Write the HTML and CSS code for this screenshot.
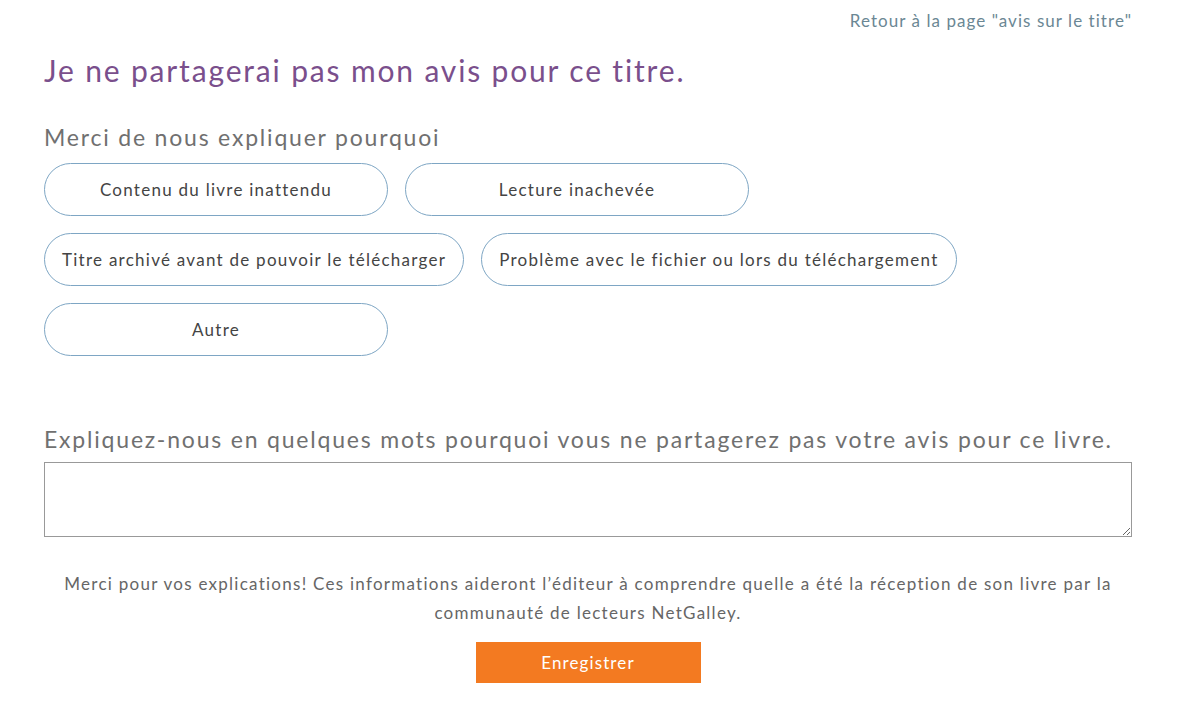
FILE: index.html
```html
<!DOCTYPE html>
<html lang="fr">
<head>
<meta charset="utf-8">
<title>Avis</title>
<link rel="stylesheet" href="styles.css">
</head>
<body>
<div class="page">
  <div class="top">
    <a class="back" href="#">Retour à la page "avis sur le titre"</a>
  </div>
  <h1 class="title">Je ne partagerai pas mon avis pour ce titre.</h1>
  <h2 class="subtitle">Merci de nous expliquer pourquoi</h2>
  <div class="pills">
    <div class="pill-row">
      <button class="pill">Contenu du livre inattendu</button>
      <button class="pill">Lecture inachevée</button>
    </div>
    <div class="pill-row">
      <button class="pill">Titre archivé avant de pouvoir le télécharger</button>
      <button class="pill">Problème avec le fichier ou lors du téléchargement</button>
    </div>
    <div class="pill-row">
      <button class="pill">Autre</button>
    </div>
  </div>
  <h2 class="subtitle explain">Expliquez-nous en quelques mots pourquoi vous ne partagerez pas votre avis pour ce livre.</h2>
  <textarea class="box"></textarea>
  <p class="thanks">Merci pour vos explications! Ces informations aideront l’éditeur à comprendre quelle a été la réception de son livre par la communauté de lecteurs NetGalley.</p>
  <div class="actions">
    <button class="save">Enregistrer</button>
  </div>
</div>
</body>
</html>
```
FILE: styles.css
```css
html, body {
  margin: 0;
  padding: 0;
  background: #fff;
}
body {
  font-family: Lato, "Open Sans", sans-serif;
  color: #555;
}
.page {
  width: 1088px;
  margin-left: 44px;
  display: flex;
  flex-direction: column;
}
.top {
  display: flex;
  justify-content: flex-end;
  padding-top: 9px;
}
.back {
  color: #6b8794;
  text-decoration: none;
  font-size: 17px;
  line-height: 24px;
  letter-spacing: 1.05px;
}
.title {
  margin: 17px 0 0;
  font-weight: 400;
  font-size: 30px;
  line-height: 40px;
  letter-spacing: 1.84px;
  color: #7a4f8c;
}
.subtitle {
  margin: 33px 0 0;
  font-weight: 400;
  font-size: 23px;
  line-height: 28px;
  letter-spacing: 1.8px;
  color: #707070;
}
.pills {
  display: flex;
  flex-direction: column;
  gap: 17px;
  margin-top: 12px;
}
.pill-row {
  display: flex;
  gap: 17px;
}
.pill {
  min-width: 344px;
  height: 53px;
  padding: 0 17px;
  border: 1px solid #7ea6c4;
  border-radius: 27px;
  background: #fff;
  font-family: inherit;
  font-size: 17px;
  letter-spacing: 1.26px;
  color: #444;
}
.explain {
  margin-top: 69px;
}
.box {
  margin-top: 9px;
  height: 75px;
  box-sizing: border-box;
  border: 1px solid #999;
  resize: vertical;
  font-family: inherit;
}
.thanks {
  margin: 32px 0 0;
  padding: 0 12px;
  text-align: center;
  font-size: 17px;
  line-height: 29px;
  letter-spacing: 1.26px;
  color: #666;
}
.actions {
  display: flex;
  justify-content: center;
  margin-top: 15px;
}
.save {
  width: 225px;
  height: 41px;
  border: none;
  background: #f37a21;
  color: #fff;
  font-family: inherit;
  font-size: 17px;
  letter-spacing: 1.1px;
}
```
